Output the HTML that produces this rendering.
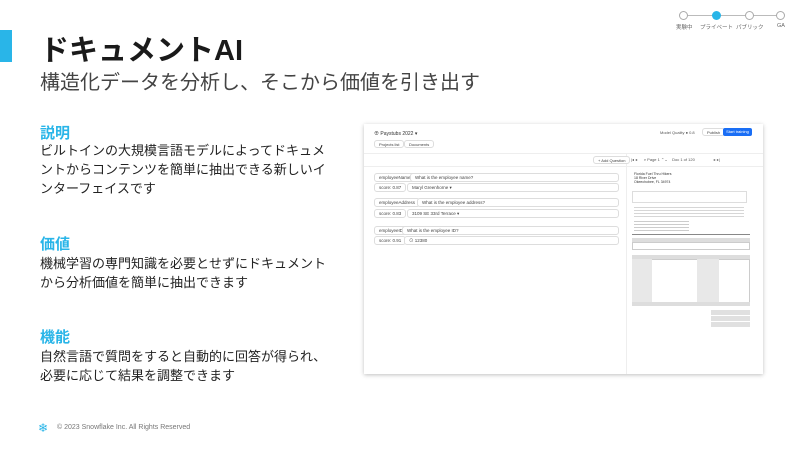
<!DOCTYPE html>
<html><head><meta charset="utf-8"><style>
*{margin:0;padding:0;box-sizing:border-box}
body{width:800px;height:449px;background:#fff;position:relative;overflow:hidden;font-family:"Liberation Sans","Noto Sans CJK JP",sans-serif;color:#222}
.a{position:absolute}
.h{color:#29b5e8;font-weight:bold;font-size:15px}
.t{font-size:13px;line-height:19px;color:#222;width:290px}
.sm{font-size:4px;color:#555}
.box{position:absolute;border:1px solid #ddd;border-radius:3px;background:#fff;font-size:4.5px;color:#444;padding:0 4px;display:flex;align-items:center;white-space:nowrap}
.doc div{position:absolute}
</style></head><body>
<div class="a" style="left:0;top:30px;width:12px;height:32px;background:#29b5e8"></div>
<div class="a" style="left:40px;top:27px;font-size:29px;font-weight:bold;color:#1a1a1a">ドキュメントAI</div>
<div class="a" style="left:40px;top:66px;font-size:20px;color:#444">構造化データを分析し、そこから価値を引き出す</div>

<div class="a" style="left:684px;top:15px;width:97px;height:1px;background:#bbb"></div>
<div class="a" style="left:679px;top:11px;width:9px;height:9px;border:1px solid #aaa;border-radius:50%;background:#fff"></div>
<div class="a" style="left:712px;top:11px;width:9px;height:9px;border-radius:50%;background:#29b5e8"></div>
<div class="a" style="left:745px;top:11px;width:9px;height:9px;border:1px solid #aaa;border-radius:50%;background:#fff"></div>
<div class="a" style="left:776px;top:11px;width:9px;height:9px;border:1px solid #aaa;border-radius:50%;background:#fff"></div>
<div class="a" style="left:676px;top:23px;font-size:5.5px;color:#666;width:120px;white-space:nowrap">
<span class="a" style="left:0">実験中</span><span class="a" style="left:24px">プライベート</span><span class="a" style="left:60px">パブリック</span><span class="a" style="left:101px">GA</span></div>

<div class="a h" style="left:40px;top:122px">説明</div>
<div class="a t" style="left:40px;top:141px">ビルトインの大規模言語モデルによってドキュメントからコンテンツを簡単に抽出できる新しいインターフェイスです</div>
<div class="a h" style="left:40px;top:233px">価値</div>
<div class="a t" style="left:40px;top:254px">機械学習の専門知識を必要とせずにドキュメントから分析価値を簡単に抽出できます</div>
<div class="a h" style="left:40px;top:326px">機能</div>
<div class="a t" style="left:40px;top:347px">自然言語で質問をすると自動的に回答が得られ、必要に応じて結果を調整できます</div>

<div class="a" style="left:38px;top:422px;font-size:12px;color:#29b5e8;line-height:12px">❄</div>
<div class="a" style="left:57px;top:424px;font-size:7px;color:#777">© 2023 Snowflake Inc. All Rights Reserved</div>

<div class="a" style="left:364px;top:124px;width:399px;height:250px;background:#fff;box-shadow:0 1px 4px rgba(0,0,0,.25)">
 <div class="a sm" style="left:10px;top:6px;font-size:5px;color:#333">⊕ Paystubs 2022 ▾</div>
 <div class="box" style="left:10px;top:16px;height:8px;font-size:4px">Projects list</div>
 <div class="box" style="left:40px;top:16px;height:8px;font-size:4px">Documents</div>
 <div class="a sm" style="left:296px;top:6px">Model Quality ● 0.8</div>
 <div class="box" style="left:338px;top:4px;height:8px;font-size:4px">Publish</div>
 <div class="a" style="left:359px;top:4px;width:29px;height:8px;background:#1a6ef5;border-radius:2px;color:#fff;font-size:4px;text-align:center;line-height:8px">Start training</div>
 <div class="a" style="left:0;top:29px;width:399px;height:1px;background:#eee"></div>
 <div class="a" style="left:262px;top:30px;width:1px;height:220px;background:#eee"></div>
 <div class="a" style="left:0;top:42px;width:399px;height:1px;background:#eee"></div>
 <div class="box" style="left:229px;top:32px;height:8px;font-size:4px">+ Add Question</div>
 <div class="a sm" style="left:267px;top:33px;white-space:nowrap">|◂ ◂ &nbsp;&nbsp;&nbsp;&nbsp; ⌕ Page 1 ⌃⌄ &nbsp;&nbsp; Doc 1 of 120 &nbsp;&nbsp;&nbsp;&nbsp;&nbsp;&nbsp;&nbsp;&nbsp;&nbsp;&nbsp;&nbsp;&nbsp;&nbsp;&nbsp;&nbsp; ▸ ▸|</div>
 <div class="box" style="left:10px;top:49px;height:9px">employeeName</div>
 <div class="box" style="left:46px;top:49px;height:9px;width:209px">What is the employee name?</div>
 <div class="box" style="left:10px;top:59px;height:9px">score: 0.87</div>
 <div class="box" style="left:43px;top:59px;height:9px;width:212px">Maryl Greenhorne ▾</div>
 <div class="box" style="left:10px;top:74px;height:9px">employeeAddress</div>
 <div class="box" style="left:53px;top:74px;height:9px;width:202px">What is the employee address?</div>
 <div class="box" style="left:10px;top:85px;height:9px">score: 0.83</div>
 <div class="box" style="left:43px;top:85px;height:9px;width:212px">3109 SE 33rd Terrace ▾</div>
 <div class="box" style="left:10px;top:102px;height:9px">employeeID</div>
 <div class="box" style="left:38px;top:102px;height:9px;width:217px">What is the employee ID?</div>
 <div class="box" style="left:10px;top:112px;height:9px">score: 0.91</div>
 <div class="box" style="left:40px;top:112px;height:9px;width:215px">⊙ 12380</div>
 <div class="doc a" style="left:263px;top:0;width:136px;height:250px">
  <div style="left:7px;top:48px;font-size:3.5px;color:#333;line-height:4px">Florida Fuel Thru Hikers<br>18 River Drive<br>Okeechobee, FL 34974</div>
  <div style="left:5px;top:67px;width:115px;height:12px;border:1px solid #ddd"></div>
  <div style="left:7px;top:83px;width:110px;height:10px;background:repeating-linear-gradient(#999 0 1px,transparent 1px 3px);opacity:.4"></div>
  <div style="left:7px;top:97px;width:55px;height:12px;background:repeating-linear-gradient(#999 0 1px,transparent 1px 3px);opacity:.5"></div>
  <div style="left:5px;top:110px;width:118px;height:1px;background:#888"></div>
  <div style="left:5px;top:114px;width:118px;height:4px;background:#ddd"></div>
  <div style="left:5px;top:118px;width:118px;height:8px;border:1px solid #ccc"></div>
  <div style="left:5px;top:131px;width:118px;height:4px;background:#ddd"></div>
  <div style="left:5px;top:135px;width:118px;height:44px;border:1px solid #ccc"></div>
  <div style="left:5px;top:135px;width:20px;height:44px;background:#e8e8e8"></div>
  <div style="left:70px;top:135px;width:22px;height:44px;background:#e8e8e8"></div>
  <div style="left:5px;top:178px;width:118px;height:4px;background:#ddd"></div>
  <div style="left:84px;top:186px;width:39px;height:18px;background:repeating-linear-gradient(#e0e0e0 0 5px,#fff 5px 6px)"></div>
 </div>
</div>
</body></html>
